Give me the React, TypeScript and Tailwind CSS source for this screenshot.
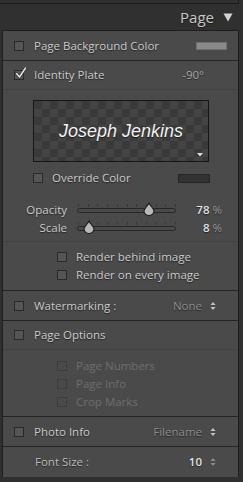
import React from "react";

const shadow = "[text-shadow:0_1px_1px_rgba(0,0,0,0.55)]";

function Box({ checked = false, dim = false }: { checked?: boolean; dim?: boolean }) {
  return (
    <div className="relative w-[10px] h-[10px] shrink-0">
      <div
        className={
          "w-[10px] h-[10px] border " +
          (dim ? "border-[#3c3c3c] bg-[#4a4a4a]" : "border-[#2a2a2a] bg-[#555555]")
        }
      />
      {checked && (
        <svg className="absolute left-[1px] top-[-3px]" width="12" height="12" viewBox="0 0 12 12">
          <path d="M1.5 6.5 L4.5 10 L10.5 1" fill="none" stroke="#2a2a2a" strokeWidth="2.6" strokeLinecap="round" strokeLinejoin="round" />
          <path d="M1.5 6.5 L4.5 10 L10.5 1" fill="none" stroke="#e6e6e6" strokeWidth="1.5" strokeLinecap="round" strokeLinejoin="round" />
        </svg>
      )}
    </div>
  );
}

function Arrows({ dim = false }: { dim?: boolean }) {
  const c = dim ? "#8a8a8a" : "#c4c4c4";
  return (
    <svg width="6" height="10" viewBox="0 0 6 10" className="shrink-0">
      <path d="M0.5 4 L3 1 L5.5 4 Z" fill={c} />
      <path d="M0.5 6 L3 9 L5.5 6 Z" fill={c} />
    </svg>
  );
}

function Slider({ pos }: { pos: number }) {
  const ticks = [0, 1, 2, 3, 4, 5, 6, 7, 8, 9, 10];
  return (
    <div className="relative w-[99px] h-[16px]">
      {ticks.map((t) => (
        <div
          key={t}
          className="absolute top-[2px] w-px h-[3px] bg-[#383838]"
          style={{ left: `${1 + t * 9.7}px` }}
        />
      ))}
      <div className="absolute left-0 right-0 top-[6px] h-[5px] rounded-full border border-[#262626] bg-[#4a4a4a]" />
      <svg
        className="absolute top-[0px]"
        style={{ left: `${pos - 6}px` }}
        width="12"
        height="14"
        viewBox="0 0 12 14"
      >
        <path d="M6 1 C7 3.5 11 6.5 11 9 A5 4.5 0 0 1 1 9 C1 6.5 5 3.5 6 1 Z" fill="#b9b9b9" stroke="#1e1e1e" strokeWidth="1.1" />
      </svg>
    </div>
  );
}

export default function App() {
  const font = "font-['Open_Sans','Noto_Sans',sans-serif]";
  return (
    <div className={"w-[243px] h-[482px] overflow-hidden bg-[#303030] " + font}>
      {/* remnant of panel above */}
      <div className="w-[239px] h-[4px] border-b border-r border-[#1c1c1c]" />
      {/* header */}
      <div className="h-[26px] flex items-center justify-end pr-[10px] gap-[9px]">
        <span className={"text-[15px] text-[#c9c9c9] " + shadow}>Page</span>
        <svg width="10" height="10" viewBox="0 0 10 10">
          <path d="M0.5 1.5 L9.5 1.5 L5 9.5 Z" fill="#d4d4d4" />
        </svg>
      </div>
      {/* panel */}
      <div className={"ml-[2px] w-[237px] border-l border-r border-t border-[#1e1e1e] bg-[#4a4a4a] text-[11.5px] text-[#cccccc] " + shadow}>
        {/* Page Background Color */}
        <div className="h-[30px] flex items-center pl-[11px] pr-[11px] border-b border-[#242424]">
          <Box />
          <span className="ml-[10px]">Page Background Color</span>
          <div className="ml-auto w-[31px] h-[8px] bg-[#8a8a8a] border border-[#6e6e6e]" />
        </div>
        {/* Identity Plate section */}
        <div className="border-b border-[#242424]">
          <div className="h-[29px] flex items-center pl-[11px] border-b border-[#424242]">
            <Box checked />
            <span className="ml-[10px]">Identity Plate</span>
            <span className="ml-auto mr-[34px] text-[#a8a8a8]">-90°</span>
          </div>
          <div className="pl-[30px] pt-[10px]">
            <div className="relative w-[176px] h-[62px] border border-[#161616] bg-[#3a3a3a] bg-[image:repeating-conic-gradient(#444444_0%_25%,#3a3a3a_0%_50%)] bg-[length:16px_16px] flex items-center justify-center">
              <span className="font-['Liberation_Sans',Arial,sans-serif] italic text-[18px] text-[#f2f2f2] pt-[1px]">
                Joseph Jenkins
              </span>
              <svg className="absolute right-[5px] bottom-[4px]" width="6" height="4" viewBox="0 0 6 4">
                <path d="M0 0 L6 0 L3 3.5 Z" fill="#dcdcdc" />
              </svg>
            </div>
          </div>
          <div className="h-[32px] flex items-center pl-[30px] pr-[28px]">
            <Box />
            <span className="ml-[9px]">Override Color</span>
            <div className="ml-auto w-[32px] h-[9px] bg-[#333333] border border-[#262626]" />
          </div>
          <div className="pt-[7px] pb-[4px] border-b border-[#424242]">
            <div className="h-[18px] flex items-center">
              <span className="w-[64px] text-right">Opacity</span>
              <div className="ml-[10px]">
                <Slider pos={72} />
              </div>
              <span className="ml-auto mr-[16px]">
                <span className="text-[#e2e2e2] font-semibold">78</span>
                <span className="text-[#9a9a9a]"> %</span>
              </span>
            </div>
            <div className="h-[18px] flex items-center">
              <span className="w-[64px] text-right">Scale</span>
              <div className="ml-[10px]">
                <Slider pos={12} />
              </div>
              <span className="ml-auto mr-[16px]">
                <span className="text-[#e2e2e2] font-semibold">8</span>
                <span className="text-[#9a9a9a]"> %</span>
              </span>
            </div>
          </div>
          <div className="pt-[6px] pb-[6px] pl-[54px]">
            <div className="h-[18px] flex items-center">
              <Box />
              <span className="ml-[9px]">Render behind image</span>
            </div>
            <div className="h-[18px] flex items-center">
              <Box />
              <span className="ml-[9px]">Render on every image</span>
            </div>
          </div>
        </div>
        {/* Watermarking */}
        <div className="h-[30px] flex items-center pl-[11px] pr-[22px] border-b border-[#242424]">
          <Box />
          <span className="ml-[10px]">Watermarking :</span>
          <span className="ml-auto mr-[8px] text-[#8e8e8e]">None</span>
          <Arrows />
        </div>
        {/* Page Options */}
        <div className="border-b border-[#242424]">
          <div className="h-[29px] flex items-center pl-[11px] border-b border-[#424242]">
            <Box />
            <span className="ml-[10px]">Page Options</span>
          </div>
          <div className="pt-[7px] pb-[5px] pl-[54px] text-[#6e6e6e] [text-shadow:none]">
            <div className="h-[18px] flex items-center">
              <Box dim />
              <span className="ml-[9px]">Page Numbers</span>
            </div>
            <div className="h-[18px] flex items-center">
              <Box dim />
              <span className="ml-[9px]">Page Info</span>
            </div>
            <div className="h-[18px] flex items-center">
              <Box dim />
              <span className="ml-[9px]">Crop Marks</span>
            </div>
          </div>
        </div>
        {/* Photo Info */}
        <div className="h-[30px] flex items-center pl-[11px] pr-[22px] border-b border-[#242424]">
          <Box />
          <span className="ml-[10px]">Photo Info</span>
          <span className="ml-auto mr-[8px] text-[#8e8e8e]">Filename</span>
          <Arrows />
        </div>
        {/* Font Size */}
        <div className="h-[30px] flex items-center pl-[32px] pr-[22px]">
          <span className="text-[#bdbdbd]">Font Size :</span>
          <span className="ml-auto mr-[8px] text-[#e2e2e2] font-semibold">10</span>
          <Arrows dim />
        </div>
      </div>
    </div>
  );
}
